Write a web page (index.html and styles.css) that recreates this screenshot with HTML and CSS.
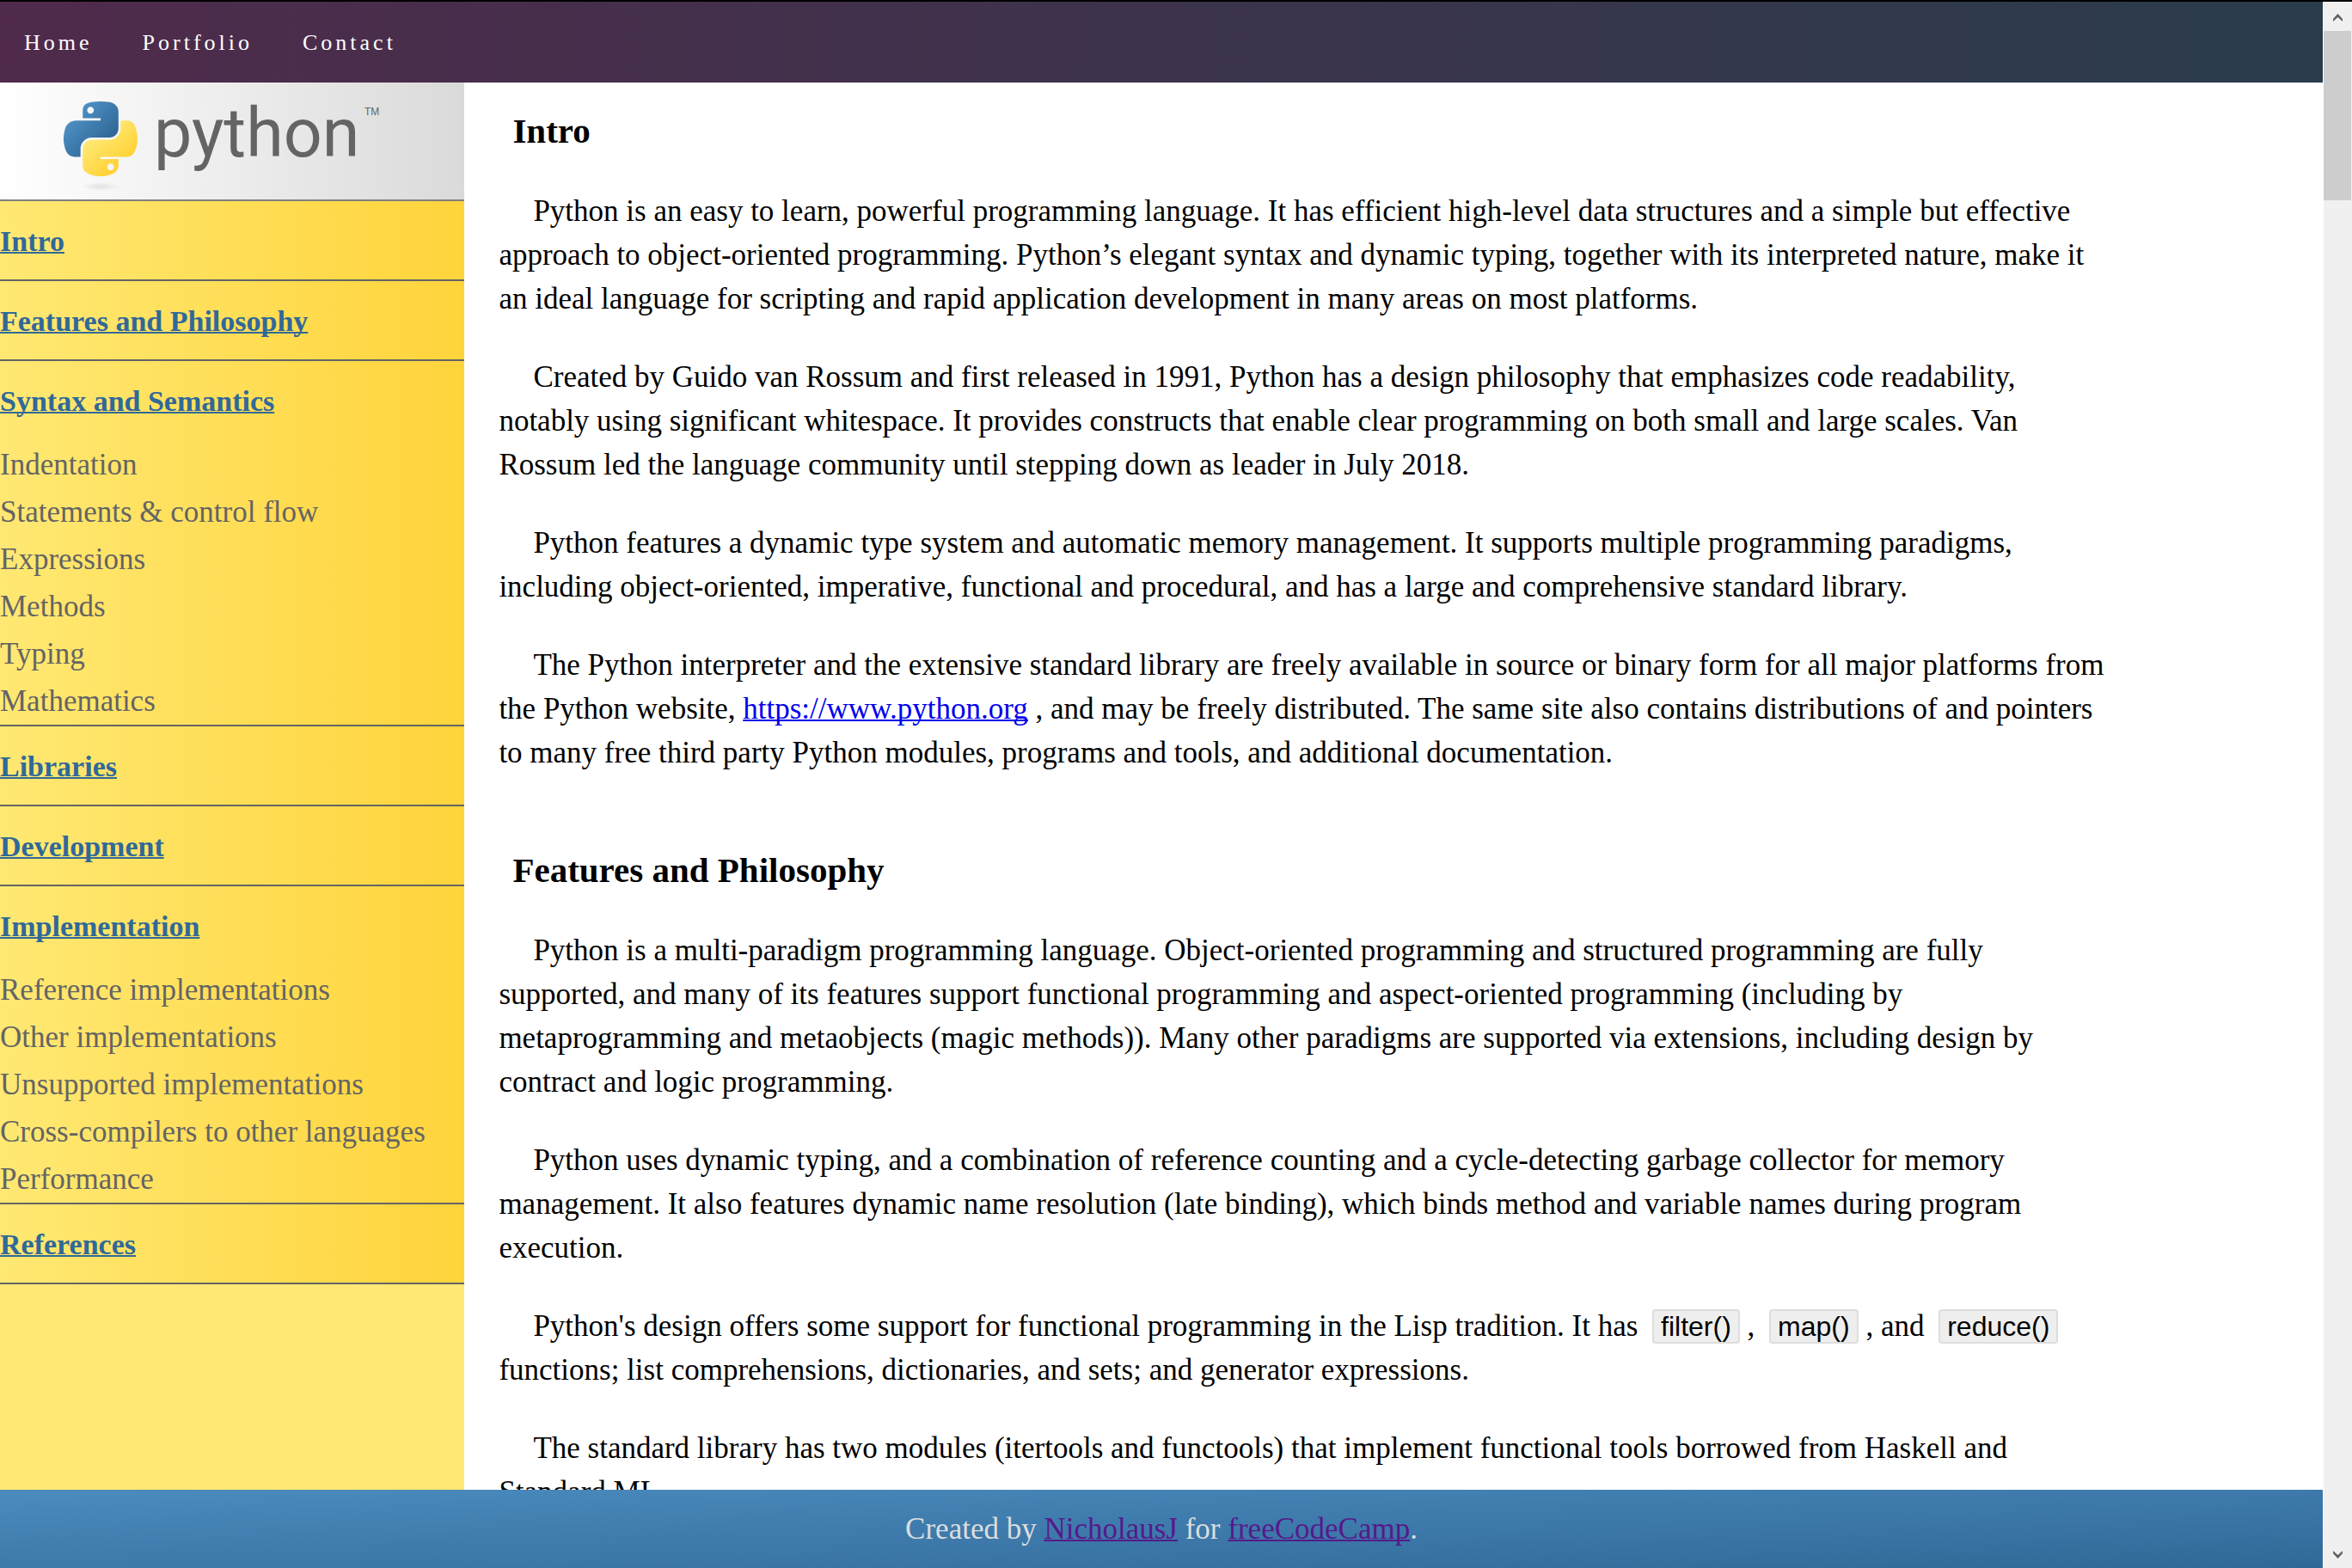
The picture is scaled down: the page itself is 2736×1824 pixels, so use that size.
FILE: index.html
```html
<!DOCTYPE html>
<html lang="en">
<head>
<meta charset="utf-8">
<title>Python Documentation</title>
<link rel="stylesheet" href="styles.css">
</head>
<body>
<div class="page">
  <header class="topbar">
    <nav class="topnav">
      <a href="#home">Home</a>
      <a href="#portfolio">Portfolio</a>
      <a href="#contact">Contact</a>
    </nav>
  </header>

  <div class="body">
    <aside class="sidebar">
      <div class="logo">
        <svg class="logo-art" viewBox="0 0 400 136" role="img" aria-label="Python">
          <defs>
            <linearGradient id="blue" x1="0" y1="0" x2="0.75" y2="0.75">
              <stop offset="0" stop-color="#5a9fd4"/>
              <stop offset="1" stop-color="#306998"/>
            </linearGradient>
            <linearGradient id="yellow" x1="0.25" y1="0.25" x2="0.65" y2="0.75">
              <stop offset="0" stop-color="#ffe873"/>
              <stop offset="1" stop-color="#ffd43b"/>
            </linearGradient>
            <radialGradient id="shadow">
              <stop offset="0" stop-color="#b8b8b8" stop-opacity="0.35"/>
              <stop offset="1" stop-color="#b8b8b8" stop-opacity="0"/>
            </radialGradient>
          </defs>
          <ellipse cx="47" cy="121" rx="22" ry="5" fill="url(#shadow)"/>
          <g transform="translate(4 22) scale(0.775)">
            <path fill="url(#blue)" d="M54.919 0C50.335.022 45.958.413 42.106 1.095 30.76 3.099 28.7 7.295 28.7 15.032V25.251H55.513V28.657H18.638C10.845 28.657 4.022 33.341 1.888 42.251-.574 52.464-.683 58.837 1.888 69.501 3.793 77.439 8.345 83.095 16.138 83.095H25.356V70.845C25.356 61.995 33.013 54.188 42.106 54.188H68.888C76.342 54.188 82.294 48.05 82.294 40.563V15.032C82.294 7.766 76.164 2.307 68.888 1.095 64.282.328 59.502-.02 54.919 0ZM40.419 8.22C43.188 8.22 45.45 10.518 45.45 13.345 45.45 16.161 43.188 18.438 40.419 18.438 37.639 18.438 35.388 16.161 35.388 13.345 35.388 10.518 37.639 8.22 40.419 8.22Z"/>
            <path fill="url(#yellow)" d="M85.638 28.657V40.563C85.638 49.794 77.812 57.563 68.888 57.563H42.106C34.77 57.563 28.7 63.842 28.7 71.188V96.72C28.7 103.986 35.019 108.26 42.106 110.345 50.594 112.84 58.732 113.291 68.888 110.345 75.638 108.39 82.294 104.457 82.294 96.72V86.501H55.513V83.095H95.7C103.492 83.095 106.396 77.659 109.106 69.501 111.906 61.102 111.787 53.025 109.106 42.251 107.181 34.493 103.503 28.657 95.7 28.657ZM70.575 93.313C73.354 93.313 75.606 95.591 75.606 98.407 75.606 101.234 73.354 103.532 70.575 103.532 67.806 103.532 65.544 101.234 65.544 98.407 65.544 95.591 67.806 93.313 70.575 93.313Z"/>
          </g>
          <text class="wordmark" x="109" y="86">python</text>
          <text class="trademark" x="354" y="38">TM</text>
        </svg>
      </div>
      <nav class="toc">
        <section class="toc-group">
          <a class="toc-title" href="#intro">Intro</a>
        </section>
        <section class="toc-group">
          <a class="toc-title" href="#features">Features and Philosophy</a>
        </section>
        <section class="toc-group">
          <a class="toc-title" href="#syntax">Syntax and Semantics</a>
          <ul class="toc-list">
            <li><a href="#indentation">Indentation</a></li>
            <li><a href="#statements">Statements &amp; control flow</a></li>
            <li><a href="#expressions">Expressions</a></li>
            <li><a href="#methods">Methods</a></li>
            <li><a href="#typing">Typing</a></li>
            <li><a href="#mathematics">Mathematics</a></li>
          </ul>
        </section>
        <section class="toc-group">
          <a class="toc-title" href="#libraries">Libraries</a>
        </section>
        <section class="toc-group">
          <a class="toc-title" href="#development">Development</a>
        </section>
        <section class="toc-group">
          <a class="toc-title" href="#implementation">Implementation</a>
          <ul class="toc-list">
            <li><a href="#reference-impl">Reference implementations</a></li>
            <li><a href="#other-impl">Other implementations</a></li>
            <li><a href="#unsupported-impl">Unsupported implementations</a></li>
            <li><a href="#cross-compilers">Cross-compilers to other languages</a></li>
            <li><a href="#performance">Performance</a></li>
          </ul>
        </section>
        <section class="toc-group">
          <a class="toc-title" href="#references">References</a>
        </section>
      </nav>
    </aside>

    <main class="content">
      <section class="chapter" id="intro">
        <h3>Intro</h3>
        <p>Python is an easy to learn, powerful programming language. It has efficient high-level data structures and a simple but effective approach to object-oriented programming. Python’s elegant syntax and dynamic typing, together with its interpreted nature, make it an ideal language for scripting and rapid application development in many areas on most platforms.</p>
        <p>Created by Guido van Rossum and first released in 1991, Python has a design philosophy that emphasizes code readability, notably using significant whitespace. It provides constructs that enable clear programming on both small and large scales. Van Rossum led the language community until stepping down as leader in July 2018.</p>
        <p>Python features a dynamic type system and automatic memory management. It supports multiple programming paradigms, including object-oriented, imperative, functional and procedural, and has a large and comprehensive standard library.</p>
        <p>The Python interpreter and the extensive standard library are freely available in source or binary form for all major platforms from the Python website, <a href="https://www.python.org">https://www.python.org</a> , and may be freely distributed. The same site also contains distributions of and pointers to many free third party Python modules, programs and tools, and additional documentation.</p>
      </section>
      <section class="chapter" id="features">
        <h3>Features and Philosophy</h3>
        <p>Python is a multi-paradigm programming language. Object-oriented programming and structured programming are fully supported, and many of its features support functional programming and aspect-oriented programming (including by metaprogramming and metaobjects (magic methods)). Many other paradigms are supported via extensions, including design by contract and logic programming.</p>
        <p>Python uses dynamic typing, and a combination of reference counting and a cycle-detecting garbage collector for memory management. It also features dynamic name resolution (late binding), which binds method and variable names during program execution.</p>
        <p>Python's design offers some support for functional programming in the Lisp tradition. It has <code>filter()</code> , <code>map()</code> , and <code>reduce()</code> functions; list comprehensions, dictionaries, and sets; and generator expressions.</p>
        <p>The standard library has two modules (itertools and functools) that implement functional tools borrowed from Haskell and Standard ML.</p>
      </section>
    </main>
  </div>

  <footer class="footer">Created by <a href="#author">NicholausJ</a> for <a href="#fcc">freeCodeCamp</a>.</footer>
</div>

<div class="scrollbar">
  <svg class="arrow" viewBox="0 0 11 9"><path d="M0 6 5.500 0 11 6V9L5.500 4 0 9Z"/></svg>
  <div class="track"><div class="thumb"></div></div>
  <svg class="arrow" viewBox="0 0 11 9"><path d="M0 3 5.500 9 11 3V0L5.500 5 0 0Z"/></svg>
</div>
</body>
</html>
```
FILE: styles.css
```css
* {
  box-sizing: border-box;
}

body {
  margin: 0;
  height: 100vh;
  display: flex;
  gap: 1px;
  border-top: 2px solid #000;
  overflow: hidden;
  background: #fff;
  color: #000;
  font-family: "Palatino Linotype", Palatino, "Liberation Serif", serif;
  font-size: 35px;
  line-height: 51px;
}

.page {
  flex: 1;
  min-width: 0;
  display: flex;
  flex-direction: column;
}

/* Top bar */
.topbar {
  flex: none;
  height: 94px;
  display: flex;
  align-items: center;
  padding: 0 28px;
  background: linear-gradient(to right, #4f2a4b, #2a3c4c);
}

.topnav {
  display: flex;
  gap: 58px;
  font-size: 26px;
  letter-spacing: 4px;
}

.topnav a {
  color: #fff;
  text-decoration: none;
}

.body {
  flex: 1;
  min-height: 0;
  display: flex;
}

/* Sidebar */
.sidebar {
  flex: none;
  width: 20%;
  overflow: hidden;
  background: #ffe873;
}

.logo {
  height: 138px;
  border-bottom: 2px solid #808080;
  background: linear-gradient(to right, #fff, #dadada);
  text-align: center;
}

.logo-art {
  display: block;
  width: 400px;
  height: 136px;
  margin: 0 auto;
}

.wordmark {
  font-family: Roboto, sans-serif;
  font-size: 79px;
  fill: #646464;
}

.trademark {
  font-family: "Liberation Sans", sans-serif;
  font-size: 12px;
  fill: #646464;
}

.toc-group {
  border-bottom: 2px solid #646464;
  background: linear-gradient(to right, #ffe873, #ffd43b);
}

.toc-title {
  display: inline-block;
  padding: 21px 0 19px;
  vertical-align: top;
  color: #306998;
  font-size: 34px;
  font-weight: bold;
}

.toc-list {
  margin: 0;
  padding: 2px 0 0;
  list-style: none;
  line-height: 55px;
}

.toc-list a {
  color: #646464;
  text-decoration: none;
}

/* Article */
.content {
  flex: 1;
  min-width: 0;
  overflow: hidden;
  padding: 31px 0 0 40px;
}

.chapter {
  margin-bottom: 86px;
}

.content h3 {
  margin: 0 0 42px;
  padding-left: 16px;
  font-size: 41px;
}

.content p {
  max-width: 1872px;
  margin: 40px 0 0;
  text-indent: 40px;
}

.content p a {
  color: #00e;
}

code {
  display: inline-block;
  margin-left: 8px;
  padding: 0 8px;
  border: 2px solid #ddd;
  border-radius: 4px;
  background: #eee;
  font-family: "Liberation Sans", Arial, sans-serif;
  font-size: 32px;
  line-height: 36px;
  text-indent: 0;
}

/* Footer */
.footer {
  flex: none;
  padding: 20px 0;
  background: linear-gradient(to bottom right, #4b8bbe, #306998);
  color: #ddd;
  text-align: center;
}

.footer a {
  color: #551a8b;
}

a {
  text-decoration-thickness: 2px;
  text-decoration-skip-ink: none;
}

/* Scrollbar */
.scrollbar {
  flex: none;
  width: 33px;
  display: flex;
  flex-direction: column;
  align-items: center;
  padding: 14px 1px 11px 0;
  background: #f0f0f0;
}

.arrow {
  flex: none;
  width: 11px;
  height: 9px;
  fill: #606060;
}

.track {
  flex: 1;
  align-self: stretch;
  padding-top: 11px;
}

.thumb {
  height: 197px;
  background: #cdcdcd;
}
```
